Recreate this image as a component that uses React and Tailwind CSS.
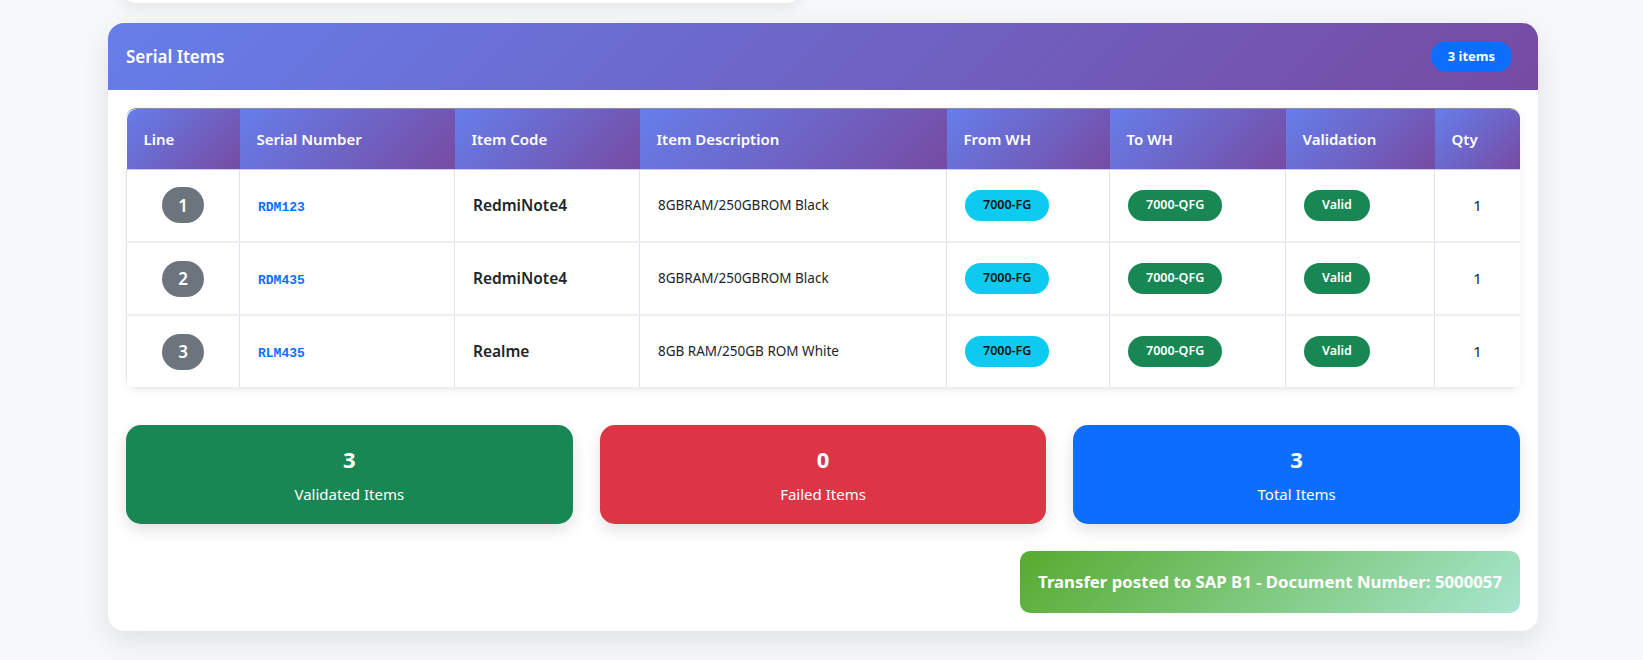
import React from 'react';

const rows = [
  { line: 1, serial: 'RDM123', code: 'RedmiNote4', desc: '8GBRAM/250GBROM Black' },
  { line: 2, serial: 'RDM435', code: 'RedmiNote4', desc: '8GBRAM/250GBROM Black' },
  { line: 3, serial: 'RLM435', code: 'Realme', desc: '8GB RAM/250GB ROM White' },
];

const columns = [
  { label: 'Line', cls: 'w-[113px] rounded-tl-[10px]' },
  { label: 'Serial Number', cls: 'w-[215px]' },
  { label: 'Item Code', cls: 'w-[185px]' },
  { label: 'Item Description', cls: 'w-[307px]' },
  { label: 'From WH', cls: 'w-[163px]' },
  { label: 'To WH', cls: 'w-[176px]' },
  { label: 'Validation', cls: 'w-[149px]' },
  { label: 'Qty', cls: 'w-[86px] rounded-tr-[10px]' },
];

const stats = [
  { value: 3, label: 'Validated Items', bg: 'bg-[#198754]' },
  { value: 0, label: 'Failed Items', bg: 'bg-[#dc3545]' },
  { value: 3, label: 'Total Items', bg: 'bg-[#0d6efd]' },
];

const pill = 'inline-flex items-center h-[31px] px-[18px] rounded-full text-[12.5px] font-semibold';

const App = () => {
  return (
    <div className="min-h-[660px] bg-[#f7f8fa] overflow-hidden font-['Noto_Sans',sans-serif] text-[#212529]">
      <div className="ml-[120px] w-[682px] h-[43px] -mt-[40px] bg-white rounded-[15px] shadow-[0_5px_15px_rgba(0,0,0,0.08)]" />

      <div className="mt-[20px] ml-[108px] w-[1430px] bg-white rounded-[16px] shadow-[0_10px_30px_rgba(0,0,0,0.1)] overflow-hidden">
        <div className="h-[67px] flex items-center justify-between pl-[18px] pr-[26px] bg-[linear-gradient(135deg,#667eea_0%,#764ba2_100%)]">
          <h2 className="text-[17px] font-semibold text-white">Serial Items</h2>
          <span className="h-[31px] px-[17px] flex items-center rounded-full bg-[#0d6efd] text-white text-[13px] font-bold">3 items</span>
        </div>

        <div className="p-[18px]">
          <div className="rounded-[10px] overflow-hidden border-t border-[#8d8b99] shadow-[0_2px_10px_rgba(0,0,0,0.06)]">
            <table className="w-full table-fixed border-collapse">
              <thead>
                <tr>
                  {columns.map((c) => (
                    <th
                      key={c.label}
                      className={`${c.cls} h-[60px] px-[17px] text-left text-[15px] font-semibold text-white border-b border-[#cfcbea] bg-[linear-gradient(135deg,#667eea_0%,#764ba2_100%)]`}
                    >
                      {c.label}
                    </th>
                  ))}
                </tr>
              </thead>
              <tbody>
                {rows.map((r) => (
                  <tr key={r.line} className="border-b-2 border-[#eceef1]">
                    <td className="h-[73px] text-center border-l border-r border-[#dee2e6]">
                      <span className="inline-flex items-center justify-center h-9 px-4 rounded-full bg-[#6c757d] text-white text-[17px] font-semibold">
                        {r.line}
                      </span>
                    </td>
                    <td className="px-[18px] border-r border-[#dee2e6]">
                      <span className="font-['Liberation_Mono',monospace] text-[13px] font-bold text-[#0d6efd]">{r.serial}</span>
                    </td>
                    <td className="px-[18px] border-r border-[#dee2e6] text-[15.5px] font-semibold">{r.code}</td>
                    <td className="px-[18px] border-r border-[#dee2e6] text-[13.5px]">{r.desc}</td>
                    <td className="px-[18px] border-r border-[#dee2e6]">
                      <span className={`${pill} bg-[#0dcaf0] text-[#111]`}>7000-FG</span>
                    </td>
                    <td className="px-[18px] border-r border-[#dee2e6]">
                      <span className={`${pill} bg-[#198754] text-white`}>7000-QFG</span>
                    </td>
                    <td className="px-[18px] border-r border-[#dee2e6]">
                      <span className={`${pill} bg-[#198754] text-white`}>Valid</span>
                    </td>
                    <td className="text-center text-[15px] border-r border-[#dee2e6]">1</td>
                  </tr>
                ))}
              </tbody>
            </table>
          </div>

          <div className="mt-[36px] grid grid-cols-3 gap-[27px]">
            {stats.map((s) => (
              <div
                key={s.label}
                className={`${s.bg} h-[99px] rounded-[15px] flex flex-col items-center justify-center text-white shadow-[0_6px_16px_rgba(0,0,0,0.12)]`}
              >
                <div className="text-[22px] font-bold leading-none">{s.value}</div>
                <div className="mt-[17px] text-[15px] leading-none">{s.label}</div>
              </div>
            ))}
          </div>

          <div className="mt-[27px] flex justify-end">
            <div className="h-[62px] px-[18px] flex items-center rounded-[10px] text-white text-[16.75px] font-bold bg-[linear-gradient(135deg,#56ab2f_0%,#a8e6cf_100%)]">
              Transfer posted to SAP B1 - Document Number: 5000057
            </div>
          </div>
        </div>
      </div>
    </div>
  );
};

export default App;
